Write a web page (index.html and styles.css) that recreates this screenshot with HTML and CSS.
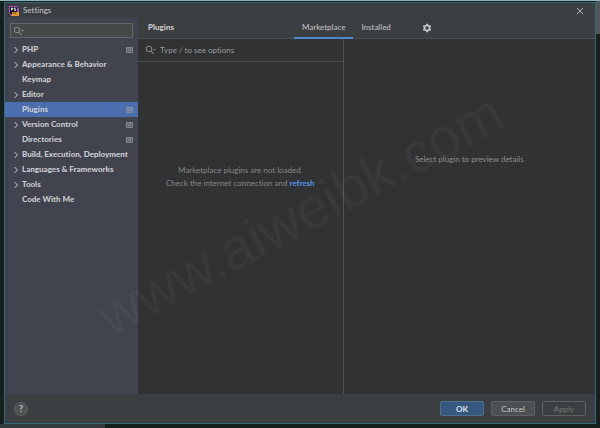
FILE: index.html
```html
<!DOCTYPE html>
<html lang="en">
<head>
    <meta charset="UTF-8">
    <meta name="viewport" content="width=device-width, initial-scale=1.0">
    <title>Settings</title>
    <link rel="stylesheet" href="styles.css">
</head>
<body>
    <svg class="symbols" aria-hidden="true">
        <symbol id="arrow" viewBox="0 0 6 8"><path d="M1.5 1l3 3-3 3" fill="none" stroke="currentColor" stroke-width="1"/></symbol>
        <symbol id="search" viewBox="0 0 12 10"><circle cx="4" cy="4" r="2.8" fill="none" stroke="currentColor"/><path d="M6 6l2.6 2.8" stroke="currentColor" stroke-width="1.1"/><path d="M8 4h3L9.500 5.600z" fill="currentColor"/></symbol>
        <symbol id="project" viewBox="0 0 7 6"><path d="M.5.5h6v5h-6z" fill="#8b95a3" fill-opacity=".3" stroke="#8f98a5" stroke-width=".8"/><path d="M1 2h5M2 3.700h3" stroke="#9aa3af" stroke-width=".7"/></symbol>
    </svg>
    <div class="window">
        <header class="titlebar">
            <svg class="logo" viewBox="0 0 10 10">
                <path d="M0 0h8l2 3v7H2L0 7z" fill="#a04bc0"/>
                <path d="M5 6h5v4H2z" fill="#e59b35"/>
                <path d="M1 1h7v7H1z" fill="#17131c"/>
                <path d="M2.500 4.500v-2.500h1.300v1.300H2.500M6.700 2H5.400v1.200h1.300v1.300H5.300" fill="none" stroke="#fff" stroke-width=".8"/>
                <path d="M3 6h6v3H3z" fill="#e59b35"/>
                <path d="M4 8.300V6.800h.8M6 8.300V6.800h.8v1.500" fill="none" stroke="#332012" stroke-width=".5"/>
            </svg>
            <span class="title">Settings</span>
            <button class="close" type="button" aria-label="Close">
                <svg viewBox="0 0 8 8"><path d="M1 1l6 6M7 1L1 7" stroke="currentColor" stroke-width=".9"/></svg>
            </button>
        </header>

        <div class="content">
            <aside class="sidebar">
                <label class="search-box">
                    <svg class="search-icon"><use href="#search"/></svg>
                    <input type="text" aria-label="Search settings">
                </label>
                <nav class="menu">
                    <a href="#"><svg class="arrow"><use href="#arrow"/></svg><span>PHP</span><svg class="project"><use href="#project"/></svg></a>
                    <a href="#"><svg class="arrow"><use href="#arrow"/></svg><span>Appearance &amp; Behavior</span></a>
                    <a href="#" class="leaf"><span>Keymap</span></a>
                    <a href="#"><svg class="arrow"><use href="#arrow"/></svg><span>Editor</span></a>
                    <a href="#" class="leaf selected"><span>Plugins</span><svg class="project"><use href="#project"/></svg></a>
                    <a href="#"><svg class="arrow"><use href="#arrow"/></svg><span>Version Control</span><svg class="project"><use href="#project"/></svg></a>
                    <a href="#" class="leaf"><span>Directories</span><svg class="project"><use href="#project"/></svg></a>
                    <a href="#"><svg class="arrow"><use href="#arrow"/></svg><span>Build, Execution, Deployment</span></a>
                    <a href="#"><svg class="arrow"><use href="#arrow"/></svg><span>Languages &amp; Frameworks</span></a>
                    <a href="#"><svg class="arrow"><use href="#arrow"/></svg><span>Tools</span></a>
                    <a href="#" class="leaf"><span>Code With Me</span></a>
                </nav>
            </aside>

            <main class="main">
                <div class="main-header">
                    <h1>Plugins</h1>
                    <div class="tabs">
                        <button class="tab active" type="button">Marketplace</button>
                        <button class="tab" type="button">Installed</button>
                    </div>
                    <button class="gear" type="button" aria-label="Plugin settings">
                        <svg viewBox="0 0 10 10">
                            <circle cx="5" cy="5" r="2.500" fill="none" stroke="currentColor" stroke-width="1.700"/>
                            <path d="M5 .8v1.400M5 7.800v1.400M1.360 2.900l1.220.7M7.420 6.400l1.220.7M1.360 7.100l1.220-.7M7.420 3.600l1.220-.7" stroke="currentColor" stroke-width="2"/>
                        </svg>
                    </button>
                </div>
                <div class="panels">
                    <section class="list">
                        <label class="plugin-search">
                            <svg class="search-icon"><use href="#search"/></svg>
                            <input type="text" placeholder="Type / to see options" aria-label="Search plugins">
                        </label>
                        <p class="empty">Marketplace plugins are not loaded.<br>Check the internet connection and <a href="#">refresh</a></p>
                    </section>
                    <section class="details">
                        <p>Select plugin to preview details</p>
                    </section>
                </div>
            </main>
        </div>

        <footer class="footer">
            <button class="help" type="button" aria-label="Help">?</button>
            <div class="buttons">
                <button class="btn primary" type="button">OK</button>
                <button class="btn" type="button">Cancel</button>
                <button class="btn" type="button" disabled>Apply</button>
            </div>
        </footer>
    </div>
    <div class="watermark">www.aiweibk.com</div>
</body>
</html>
```
FILE: styles.css
```css
:root {
    --window: #3c3f41;
    --sidebar: #41434f;
    --panel: #313233;
    --line: #4b4e50;
    --text: #c3c5c7;
    --muted: #858788;
    --accent: #4b6eaf;
    --frame: #326a7b;
}
* {
    box-sizing: border-box;
}
body {
    display: flex;
    height: 100vh;
    margin: 0;
    padding: 1px 4px 4px;
    overflow: hidden;
    border-top: 1px solid #8fb3bd;
    background: linear-gradient(#50575a, #50575a) right top / 4px 34px no-repeat, linear-gradient(#343b3e, #343b3e) left bottom / 105px 4px no-repeat, #15201f;
    color: var(--text);
    font-family: Lato, sans-serif;
    font-size: 8px;
    font-variant-ligatures: none;
    line-height: 13px;
}
button, input {
    margin: 0;
    padding: 0;
    border: 0;
    background: none;
    color: inherit;
    font: inherit;
}
input {
    flex: 1;
    min-width: 0;
    outline: none;
}
svg {
    display: block;
    flex: none;
}
p {
    margin: 0;
}
a {
    text-decoration: none;
}
.symbols {
    position: absolute;
    width: 0;
    height: 0;
}
.window {
    display: flex;
    flex: 1;
    flex-direction: column;
    border: 1px solid var(--frame);
    background: var(--window);
}
.titlebar {
    display: flex;
    align-items: center;
    height: 15px;
    padding: 0 11px 0 4px;
}
.logo {
    width: 10px;
    height: 10px;
}
.title {
    flex: 1;
    padding-left: 4px;
}
.close svg {
    width: 8px;
    height: 8px;
}
.content {
    display: flex;
    flex: 1;
    min-height: 0;
}
.sidebar {
    flex: none;
    width: 133px;
    padding-top: 5px;
    background: var(--sidebar);
}
.search-box {
    display: flex;
    align-items: center;
    height: 15px;
    margin: 0 5px 4px;
    padding: 0 2px;
    border: 1px solid #62666a;
    background: #45494a;
}
.search-icon {
    width: 12px;
    height: 10px;
    color: #8b8e91;
}
.menu a {
    display: flex;
    align-items: center;
    height: 15px;
    padding: 0 5px 0 8px;
    color: #c9cbd0;
    font-weight: 900;
    white-space: nowrap;
}
.menu span {
    flex: 1;
}
.menu .leaf {
    padding-left: 17px;
}
.menu .selected {
    background: var(--accent);
}
.arrow {
    width: 6px;
    height: 8px;
    margin-right: 3px;
}
.project {
    width: 7px;
    height: 6px;
}
.main {
    display: flex;
    flex: 1;
    flex-direction: column;
    min-width: 0;
}
.main-header {
    display: flex;
    height: 21px;
    padding-left: 10px;
    border-bottom: 1px solid var(--line);
}
h1 {
    flex: none;
    width: 146px;
    margin: 0;
    color: #c9cbcd;
    font-size: 8px;
    font-weight: 900;
    line-height: 19px;
}
.tabs {
    display: flex;
}
.tab {
    height: 21px;
    padding: 0 8px;
    border-bottom: 2px solid transparent;
    line-height: 19px;
}
.tab.active {
    border-bottom-color: #4a88c7;
}
.gear {
    width: 10px;
    margin-left: 23px;
    color: #c4c7c9;
}
.gear svg {
    width: 10px;
    height: 10px;
}
.panels {
    display: flex;
    flex: 1;
    background: var(--panel);
}
.list {
    display: flex;
    flex-direction: column;
    width: 45%;
    border-right: 1px solid #505254;
}
.plugin-search {
    display: flex;
    align-items: center;
    gap: 3px;
    height: 23px;
    padding-left: 7px;
    border-bottom: 1px solid var(--line);
}
.plugin-search input::placeholder {
    color: #999b9d;
    opacity: 1;
}
.empty {
    padding-top: 102px;
    color: var(--muted);
    text-align: center;
}
.empty a {
    color: #5394e8;
    font-weight: 700;
}
.details {
    flex: 1;
    padding-top: 114px;
    color: #8e9091;
    text-align: center;
}
.footer {
    display: flex;
    align-items: center;
    justify-content: space-between;
    height: 29px;
    padding: 0 9px;
}
.help {
    width: 14px;
    height: 14px;
    border: 1px solid #5e6163;
    border-radius: 50%;
    background: #505354;
    font-size: 9px;
    font-weight: 700;
    line-height: 12px;
}
.buttons {
    display: flex;
    gap: 7px;
}
.btn {
    width: 44px;
    height: 15px;
    border: 1px solid #5e6163;
    border-radius: 2px;
    background: #4c5052;
    line-height: 12px;
}
.btn.primary {
    border-color: #4c708c;
    background: #365880;
    color: #d2d9e0;
    font-weight: 900;
}
.btn:disabled {
    background: none;
    color: #777a7c;
}
.watermark {
    position: absolute;
    top: 50%;
    left: 50%;
    color: rgba(150, 160, 165, 0.07);
    font-family: "Liberation Sans", sans-serif;
    font-size: 57px;
    line-height: 64px;
    pointer-events: none;
    transform: translate(-50%, -50%) rotate(-28deg);
}
```
